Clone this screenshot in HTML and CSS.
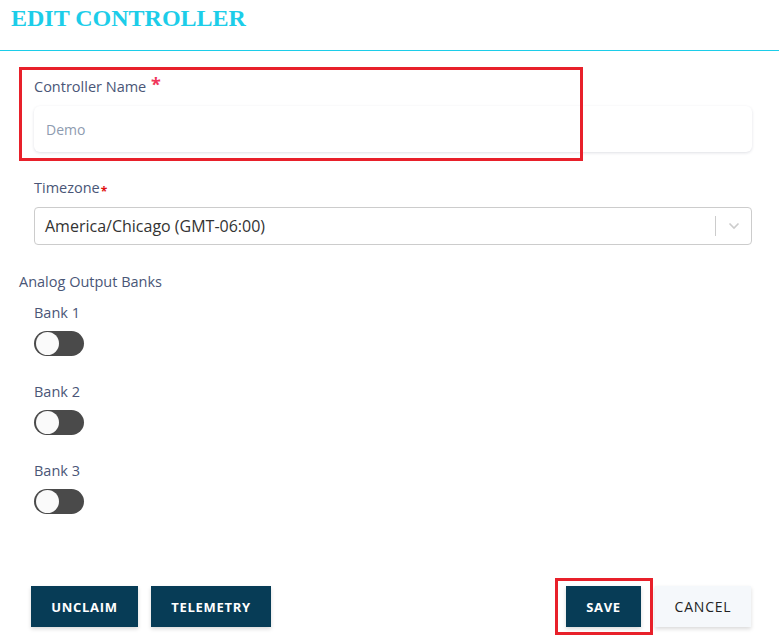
FILE: index.html
```html
<!doctype html>
<html lang="en">
  <head>
    <meta charset="UTF-8" />
    <meta name="viewport" content="width=device-width, initial-scale=1.0" />
    <title>Edit Controller</title>
    <link rel="stylesheet" href="styles.css">
  </head>
  <body>
    <!-- Header -->
    <div class="header">
      <h1>EDIT CONTROLLER</h1>
    </div>

    <div class="form">
      <!-- Controller name -->
      <div class="field name-field">
        <label>Controller Name <span class="req">*</span></label>
        <input type="text" placeholder="Demo" />
        <div class="mark mark-name"></div>
      </div>

      <!-- Timezone -->
      <div class="field tz-field">
        <label>Timezone<span class="req-small">*</span></label>
        <div class="select">
          <span class="select-value">America/Chicago (GMT-06:00)</span>
          <span class="select-sep"></span>
          <svg class="chevron" width="12" height="8" viewBox="0 0 12 8">
            <path d="M1.5 1.5 L6 6 L10.5 1.5" fill="none" stroke="#cccccc" stroke-width="1.6" />
          </svg>
        </div>
      </div>

      <!-- Banks -->
      <div class="banks-title">Analog Output Banks</div>
      <div class="banks">
        <div class="bank">
          <div class="bank-label">Bank 1</div>
          <div class="toggle"><span class="knob"></span></div>
        </div>
        <div class="bank">
          <div class="bank-label">Bank 2</div>
          <div class="toggle"><span class="knob"></span></div>
        </div>
        <div class="bank">
          <div class="bank-label">Bank 3</div>
          <div class="toggle"><span class="knob"></span></div>
        </div>
      </div>
    </div>

    <!-- Footer buttons -->
    <div class="footer">
      <div class="footer-left">
        <button class="btn btn-dark btn-unclaim">UNCLAIM</button>
        <button class="btn btn-dark btn-telemetry">TELEMETRY</button>
      </div>
      <div class="footer-right">
        <div class="save-wrap">
          <button class="btn btn-dark btn-save">SAVE</button>
          <div class="mark mark-save"></div>
        </div>
        <button class="btn btn-light">CANCEL</button>
      </div>
    </div>
  </body>
</html>
```

FILE: styles.css
```css
* {
  margin: 0;
  padding: 0;
  box-sizing: border-box;
}

body {
  font-family: "Open Sans", "Noto Sans", sans-serif;
  background: #fff;
  width: 779px;
  height: 639px;
  overflow: hidden;
}

.header {
  height: 51px;
  border-bottom: 1px solid #1ccde9;
  padding: 3px 0 0 11px;
}

.header h1 {
  font-family: "Liberation Serif", "Times New Roman", serif;
  font-weight: bold;
  font-size: 24px;
  color: #1ccde9;
  line-height: 30px;
}

.form {
  padding: 0 27px 0 19px;
}

.field {
  margin-left: 15px;
  position: relative;
}

.field label {
  display: block;
  font-size: 14.5px;
  font-weight: 500;
  color: #4a5677;
  line-height: 20px;
}

.name-field {
  padding-top: 26px;
}

.req {
  color: #f0365a;
  font-size: 18px;
  font-weight: bold;
  position: relative;
  top: -1px;
  line-height: 0;
  margin-left: 1px;
}

.req-small {
  color: #e01010;
  font-size: 12px;
  font-weight: bold;
  position: relative;
  top: 3px;
  line-height: 0;
  margin-left: 1px;
}

.name-field input {
  display: block;
  width: 100%;
  height: 46px;
  margin-top: 9px;
  border: none;
  border-radius: 6px;
  box-shadow: 0 1px 3px rgba(40, 50, 80, 0.15);
  padding: 0 12px;
  font-family: inherit;
  font-size: 14px;
  outline: none;
}

.name-field input::placeholder {
  color: #8e9bb0;
}

.tz-field {
  padding-top: 26px;
}

.select {
  display: flex;
  align-items: center;
  height: 38px;
  margin-top: 9px;
  border: 1px solid #cccccc;
  border-radius: 4px;
  padding: 0 0 0 10px;
}

.select-value {
  flex: 1;
  font-size: 16px;
  color: #333;
}

.select-sep {
  width: 1px;
  height: 20px;
  background: #cccccc;
}

.chevron {
  margin: 0 11px 0 12px;
}

.banks-title {
  margin-top: 27px;
  font-size: 14.5px;
  font-weight: 500;
  color: #4a5677;
  line-height: 20px;
}

.banks {
  padding-left: 15px;
}

.bank {
  padding-top: 11px;
  height: 79px;
}

.bank-label {
  font-size: 14.5px;
  font-weight: 500;
  color: #4a5677;
  line-height: 20px;
}

.toggle {
  width: 50px;
  height: 25px;
  margin-top: 8px;
  border-radius: 13px;
  background: #4a4a4a;
  padding: 1px 0 0 2px;
}

.knob {
  display: block;
  width: 23px;
  height: 23px;
  border-radius: 50%;
  background: #fafafa;
}

.footer {
  position: absolute;
  left: 0;
  right: 0;
  top: 586px;
  display: flex;
  justify-content: space-between;
  padding: 0 28px 0 31px;
}

.footer-left,
.footer-right {
  display: flex;
  gap: 13px;
}

.footer-right {
  gap: 14px;
}

.btn {
  height: 41px;
  border: none;
  font-family: inherit;
  font-size: 13px;
  font-weight: bold;
  letter-spacing: 0.7px;
  box-shadow: 0 2px 4px rgba(0, 0, 0, 0.15);
  cursor: pointer;
}

.btn-dark {
  background: #073c56;
  color: #fff;
}

.btn-unclaim {
  width: 107px;
}

.btn-telemetry {
  width: 120px;
}

.btn-save {
  width: 75px;
}

.btn-light {
  background: #f5f8fb;
  color: #222;
  font-weight: normal;
  font-size: 14px;
  letter-spacing: 0.8px;
  width: 96px;
}

.save-wrap {
  position: relative;
}

/* red annotation boxes */
.mark {
  position: absolute;
  border: 3px solid #e8202a;
  pointer-events: none;
}

.mark-name {
  left: -15px;
  top: 16px;
  width: 564px;
  height: 94px;
}

.mark-save {
  left: -11px;
  top: -8px;
  width: 98px;
  height: 57px;
}
```
